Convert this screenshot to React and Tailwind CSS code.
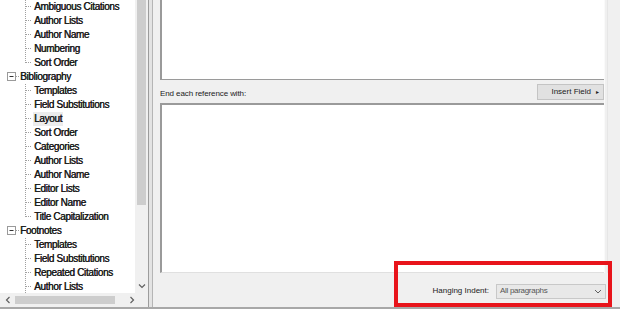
const TREE = [
  { label: 'Ambiguous Citations', level: 1 },
  { label: 'Author Lists', level: 1 },
  { label: 'Author Name', level: 1 },
  { label: 'Numbering', level: 1 },
  { label: 'Sort Order', level: 1, last: true },
  { label: 'Bibliography', level: 0 },
  { label: 'Templates', level: 1 },
  { label: 'Field Substitutions', level: 1 },
  { label: 'Layout', level: 1, selected: true },
  { label: 'Sort Order', level: 1 },
  { label: 'Categories', level: 1 },
  { label: 'Author Lists', level: 1 },
  { label: 'Author Name', level: 1 },
  { label: 'Editor Lists', level: 1 },
  { label: 'Editor Name', level: 1 },
  { label: 'Title Capitalization', level: 1, last: true },
  { label: 'Footnotes', level: 0 },
  { label: 'Templates', level: 1 },
  { label: 'Field Substitutions', level: 1 },
  { label: 'Repeated Citations', level: 1 },
  { label: 'Author Lists', level: 1 },
]

function Connector({ level, last }) {
  if (level === 0) {
    return (
      <svg width="19" height="14" className="shrink-0">
        <rect x="7.5" y="2.5" width="8" height="8" fill="#fff" stroke="#9a9a9a" />
        <line x1="9.5" y1="6.5" x2="13.5" y2="6.5" stroke="#333" />
        <line x1="16" y1="6.5" x2="19" y2="6.5" stroke="#a0a0a0" strokeDasharray="1 1" />
      </svg>
    )
  }
  return (
    <svg width="33" height="14" className="shrink-0">
      <line x1="25.5" y1="0" x2="25.5" y2={last ? 7 : 14} stroke="#a0a0a0" strokeDasharray="1 1" />
      <line x1="26" y1="6.5" x2="31" y2="6.5" stroke="#a0a0a0" strokeDasharray="1 1" />
    </svg>
  )
}

function TreeRow({ item }) {
  return (
    <div className="flex items-center h-[14px]">
      <Connector level={item.level} last={item.last} />
      <span
        className={`px-[1px] leading-[14px] whitespace-nowrap ${item.selected ? 'bg-[#ececec]' : ''}`}
      >
        {item.label}
      </span>
    </div>
  )
}

export default function App() {
  return (
    <div className="w-[620px] h-[309px] flex flex-col overflow-hidden bg-[#f0f0f0] font-['Liberation_Sans',Arial,sans-serif]">
      <div className="flex flex-1 min-h-0">
        {/* left: tree */}
        <div className="w-[149px] flex flex-col border-r border-[#9c9c9c] bg-white shrink-0">
          <div className="flex flex-1 min-h-0">
            <div className="flex-1 min-w-0 overflow-hidden -mt-[0.5px] text-[10px] tracking-[-0.35px] text-[#1a1a1a] [text-shadow:0.4px_0_0_#1a1a1a]">
              {TREE.map((item, i) => (
                <TreeRow key={i} item={item} />
              ))}
            </div>
            <div className="w-[13px] bg-[#f0f0f0] flex flex-col items-center">
              <div className="w-[9px] h-[205px] bg-[#cdcdcd]" />
              <div className="flex-1" />
              <svg width="8" height="6" className="mb-[4px]">
                <path d="M1 1.5 L4 4.5 L7 1.5" fill="none" stroke="#606060" strokeWidth="1.2" />
              </svg>
            </div>
          </div>
          <div className="h-[14px] bg-[#f0f0f0] flex items-center px-[5px] gap-[4px]">
            <svg width="6" height="8">
              <path d="M4.5 1 L1.5 4 L4.5 7" fill="none" stroke="#606060" strokeWidth="1.2" />
            </svg>
            <div className="flex-1 h-[8px] bg-[#cdcdcd] mr-[10px]" />
            <svg width="6" height="8" className="mr-[8px]">
              <path d="M1.5 1 L4.5 4 L1.5 7" fill="none" stroke="#606060" strokeWidth="1.2" />
            </svg>
          </div>
        </div>

        {/* splitter */}
        <div className="w-[11px] shrink-0 flex">
          <div className="w-[3px] bg-[#e3e3e3]" />
          <div className="w-[1px] bg-[#b5b5b5]" />
        </div>

        {/* right: editor */}
        <div className="relative flex-1 flex flex-col text-[8px] text-[#222]">
          <div className="flex flex-1 min-h-0">
            <div className="w-[444px] flex flex-col">
              <div className="h-[80px] bg-white border-l-2 border-b border-[#9a9a9a]" />
              <div className="flex items-end justify-between h-[23px] pb-[2px]">
                <span className="pb-[1px] tracking-[-0.1px]">End each reference with:</span>
                <div className="h-[16px] w-[67px] mb-[1px] flex items-center justify-end gap-[5px] pr-[4px] bg-[#e1e1e1] border border-[#c4c4c4]">
                  <span>Insert Field</span>
                  <span className="text-[6px]">▸</span>
                </div>
              </div>
              <div className="h-[170px] bg-white border-t-2 border-l-2 border-[#9a9a9a] border-b border-b-[#e0e0e0]" />
            </div>
            <div className="flex-1 border-l border-[#fafafa]">
              <div className="ml-[2px] h-full border-l border-[#e6e6e6]" />
            </div>
          </div>
          <div className="h-[34px] flex items-center justify-end pr-[14px] gap-[7px] pt-[2px]">
            <span>Hanging Indent:</span>
            <div className="w-[110px] h-[15px] flex items-center justify-between px-[3px] bg-[#e8e8e8] border border-[#c8c8c8] text-[#555]">
              <span className="tracking-[-0.3px]">All paragraphs</span>
              <svg width="8" height="5">
                <path d="M1 1 L4 4 L7 1" fill="none" stroke="#606060" strokeWidth="1" />
              </svg>
            </div>
          </div>

          {/* red highlight */}
          <div className="absolute left-[234px] top-[261px] w-[218px] h-[46px] border-[4px] border-[#e8141b]" />
        </div>
      </div>
      <div className="h-[2px] bg-[#a8a8a8]" />
    </div>
  )
}
